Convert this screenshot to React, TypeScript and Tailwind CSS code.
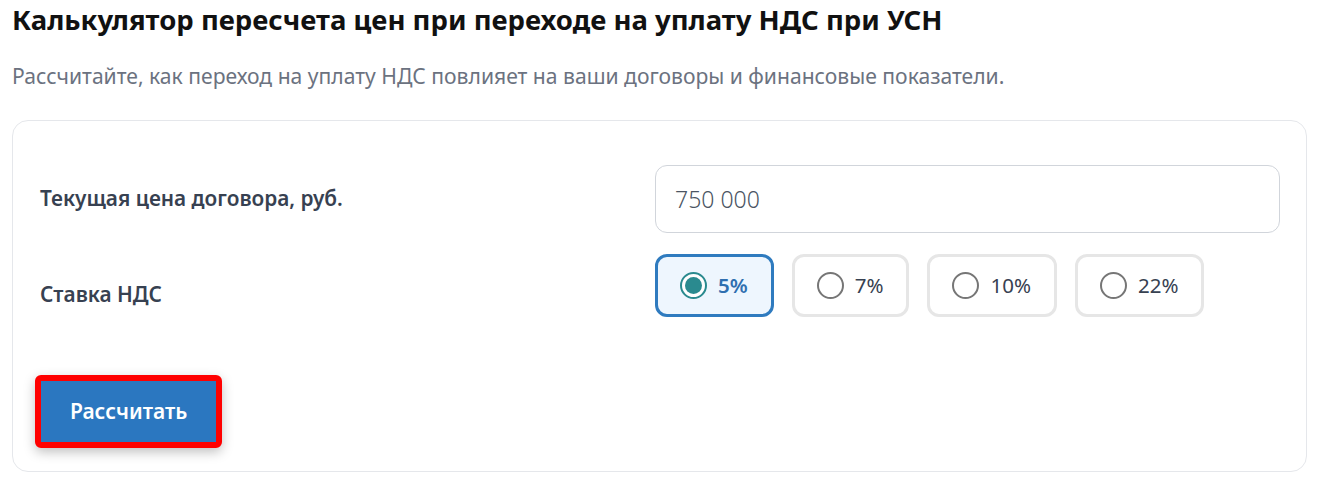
import { useState } from 'react';

const rates = ['5%', '7%', '10%', '22%'];

export default function App() {
  const [rate, setRate] = useState('5%');

  return (
    <div className="min-h-screen bg-white px-3 pt-[2px] font-['Noto_Sans','Open_Sans',sans-serif]">
      <h1 className="text-[27.5px] font-bold leading-[36px] text-[#111111]">
        Калькулятор пересчета цен при переходе на уплату НДС при УСН
      </h1>
      <p className="mt-[23px] text-[21.1px] leading-[30px] text-[#6b7280]">
        Рассчитайте, как переход на уплату НДС повлияет на ваши договоры и финансовые показатели.
      </p>

      <div className="mt-[29px] w-[1295px] rounded-2xl border border-[#e5e7eb] bg-white pb-[23px] pl-[27px] pr-[26px] pt-[44px]">
        <div className="grid grid-cols-[615px_1fr] items-center gap-y-[21px]">
          <label className="text-[20.8px] font-semibold text-[#374151]">Текущая цена договора, руб.</label>
          <input
            defaultValue="750 000"
            className="h-[68px] w-full rounded-xl border border-[#d1d5db] bg-white px-[19px] text-[23px] font-light text-[#4b5563] outline-none"
          />

          <label className="pt-[18px] text-[20.8px] font-semibold text-[#374151]">Ставка НДС</label>
          <div className="flex gap-[18px]">
            {rates.map((r) => {
              const active = r === rate;
              return (
                <button
                  key={r}
                  onClick={() => setRate(r)}
                  className={
                    active
                      ? 'flex h-[63px] items-center gap-[11px] rounded-xl border-[3px] border-[#2f7bbf] bg-[#eef6fe] pl-[22px] pr-[23px]'
                      : 'flex h-[63px] items-center gap-[11px] rounded-xl border-[3px] border-[#e6e6e6] bg-white pl-[22px] pr-[23px]'
                  }
                >
                  <span
                    className={
                      active
                        ? 'flex h-[27px] w-[27px] items-center justify-center rounded-full border-2 border-[#2a8a8f] bg-white'
                        : 'flex h-[27px] w-[27px] items-center justify-center rounded-full border-2 border-[#767676] bg-white'
                    }
                  >
                    {active && <span className="h-[17px] w-[17px] rounded-full bg-[#2a8a8f]" />}
                  </span>
                  <span
                    className={
                      active
                        ? 'text-[20.5px] font-semibold text-[#2f6fb0]'
                        : 'text-[20.5px] text-[#374151]'
                    }
                  >
                    {r}
                  </span>
                </button>
              );
            })}
          </div>
        </div>

        <button className="ml-[-5px] mt-[58px] rounded-md border-[6px] border-[#ff0000] bg-[#2b77c0] px-[29px] py-[16px] text-[21px] font-semibold leading-[29px] text-white shadow-[0_4px_12px_rgba(0,0,0,0.25)]">
          Рассчитать
        </button>
      </div>
    </div>
  );
}
